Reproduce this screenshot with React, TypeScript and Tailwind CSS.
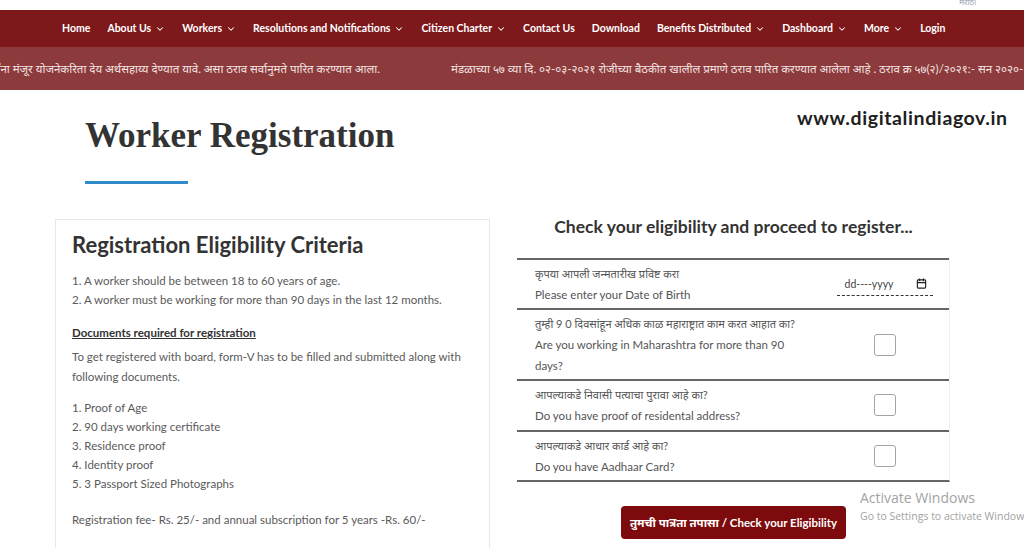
import { ChevronDown, Calendar } from "lucide-react";

const navItems = [
	{ label: "Home", menu: false },
	{ label: "About Us", menu: true },
	{ label: "Workers", menu: true },
	{ label: "Resolutions and Notifications", menu: true },
	{ label: "Citizen Charter", menu: true },
	{ label: "Contact Us", menu: false },
	{ label: "Download", menu: false },
	{ label: "Benefits Distributed", menu: true },
	{ label: "Dashboard", menu: true },
	{ label: "More", menu: true },
	{ label: "Login", menu: false },
];

const criteria = [
	"1. A worker should be between 18 to 60 years of age.",
	"2. A worker must be working for more than 90 days in the last 12 months.",
];

const documents = [
	"1. Proof of Age",
	"2. 90 days working certificate",
	"3. Residence proof",
	"4. Identity proof",
	"5. 3 Passport Sized Photographs",
];

const questions = [
	{
		mr: "तुम्ही 9 0 दिवसांहून अधिक काळ महाराष्ट्रात काम करत आहात का?",
		en: "Are you working in Maharashtra for more than 90 days?",
	},
	{
		mr: "आपल्याकडे निवासी पत्याचा पुरावा आहे का?",
		en: "Do you have proof of residental address?",
	},
	{
		mr: "आपल्याकडे आधार कार्ड आहे का?",
		en: "Do you have Aadhaar Card?",
	},
];

const font = "font-['Lato','Noto_Sans',sans-serif]";

export default function App() {
	return (
		<div className={`relative w-[1024px] h-[548px] overflow-hidden bg-white ${font}`}>
			{/* top strip */}
			<div className="h-[10px] flex justify-end pr-[48px] overflow-hidden">
				<span className="text-[8px] leading-[4px] text-gray-400">मराठी</span>
			</div>

			{/* main nav */}
			<nav className="h-[37px] bg-[#7d191b] flex items-center pl-[62px] gap-[17px] text-white text-[10.5px] font-bold">
				{navItems.map((item) => (
					<span key={item.label} className="flex items-center gap-[4px] whitespace-nowrap">
						{item.label}
						{item.menu && <ChevronDown size={10} strokeWidth={2.5} />}
					</span>
				))}
			</nav>

			{/* ticker */}
			<div className="h-[43px] bg-[#8c3a3b] flex items-center overflow-hidden text-[11.5px] text-[#f3e3e3] whitespace-nowrap">
				<div className="w-[380px] shrink-0 flex justify-end overflow-hidden">
					<span>लाभार्थ्यांना मंजूर योजनेकरिता देय अर्थसहाय्य देण्यात यावे. असा ठराव सर्वानुमते पारित करण्यात आला.</span>
				</div>
				<span className="ml-[71px]">
					मंडळाच्या ५७ व्या दि. ०२-०३-२०२१ रोजीच्या बैठकीत खालील प्रमाणे ठराव पारित करण्यात आलेला आहे . ठराव क्र ५७(२)/२०२१:- सन २०२०-२१
				</span>
			</div>

			{/* page heading */}
			<div className="pl-[85px] pt-[24px]">
				<h1 className="font-['Liberation_Serif',serif] font-bold text-[35px] leading-[44px] text-[#333]">
					Worker Registration
				</h1>
				<div className="mt-[23px] w-[103px] h-[3px] bg-[#2f8bc9]" />
			</div>

			{/* content */}
			<div className="flex pl-[55px] mt-[33px]">
				<div className="w-[435px] mt-[2px] border border-[#e8e8e8] px-[16px] pt-[11px] pb-[26px] text-[11.5px] leading-[19px] text-[#5a5a5a]">
					<h2 className="text-[22px] leading-[28px] font-bold text-[#333]">
						Registration Eligibility Criteria
					</h2>
					<div className="mt-[12px]">
						{criteria.map((c) => (
							<p key={c}>{c}</p>
						))}
					</div>
					<p className="mt-[14px] font-bold underline text-[#333] leading-[20px]">
						Documents required for registration
					</p>
					<p className="mt-[4px] leading-[20px]">
						To get registered with board, form-V has to be filled and submitted along with following documents.
					</p>
					<div className="mt-[11px]">
						{documents.map((d) => (
							<p key={d}>{d}</p>
						))}
					</div>
					<p className="mt-[17px]">
						Registration fee- Rs. 25/- and annual subscription for 5 years -Rs. 60/-
					</p>
				</div>

				<div className="w-[433px] ml-[27px]">
					<h3 className="text-center text-[17.5px] leading-[20px] font-bold text-[#333]">
						Check your eligibility and proceed to register...
					</h3>
					<div className="mt-[21px] border-b-2 border-[#666] border-r border-r-[#eee] text-[11.5px] leading-[21px] text-[#555]">
						<div className="flex border-t-2 border-[#666] pt-[3px] pb-[3px]">
							<div className="w-[288px] pl-[18px]">
								<p className="text-[11px]">कृपया आपली जन्मतारीख प्रविष्ट करा</p>
								<p>Please enter your Date of Birth</p>
							</div>
							<div className="flex-1 flex justify-center items-center pt-[4px] pl-[15px]">
								<div className="w-[96px] border-b border-dashed border-[#333] flex items-center justify-between pl-[8px] pr-[6px] pb-[4px] text-[10.5px] leading-[14px] text-[#444]">
									<span>dd----yyyy</span>
									<Calendar size={11} strokeWidth={2.5} className="text-[#222]" />
								</div>
							</div>
						</div>
						{questions.map((q, i) => (
							<div
								key={q.en}
								className={`flex border-t-2 border-[#666] pt-[3px] ${i === 1 ? "pb-[4px]" : "pb-[3px]"}`}
							>
								<div className="w-[288px] pl-[18px]">
									<p className="text-[11px]">{q.mr}</p>
									<p>{q.en}</p>
								</div>
								<div className="flex-1 flex justify-center items-center pl-[15px]">
									<div className="w-[22px] h-[22px] rounded-[3px] border border-[#a5a5a5] bg-white" />
								</div>
							</div>
						))}
					</div>
					<div className="flex justify-center mt-[24px]">
						<button className="w-[225px] h-[33px] rounded-[4px] bg-[#7d0a0c] text-white text-[11.5px] font-bold">
							तुमची पात्रता तपासा / Check your Eligibility
						</button>
					</div>
				</div>
			</div>

			{/* watermark overlays */}
			<div className="absolute left-[797px] top-[103px] text-[19.5px] font-bold text-[#1e1e1e] tracking-[0.6px]">
				www.digitalindiagov.in
			</div>
			<div className="absolute left-[860px] top-[489px] text-[#a3a3a3] font-['Open_Sans',sans-serif] whitespace-nowrap">
				<p className="text-[14px] leading-[18px]">Activate Windows</p>
				<p className="text-[10.5px] leading-[14px] mt-[2px]">Go to Settings to activate Windows.</p>
			</div>
		</div>
	);
}
